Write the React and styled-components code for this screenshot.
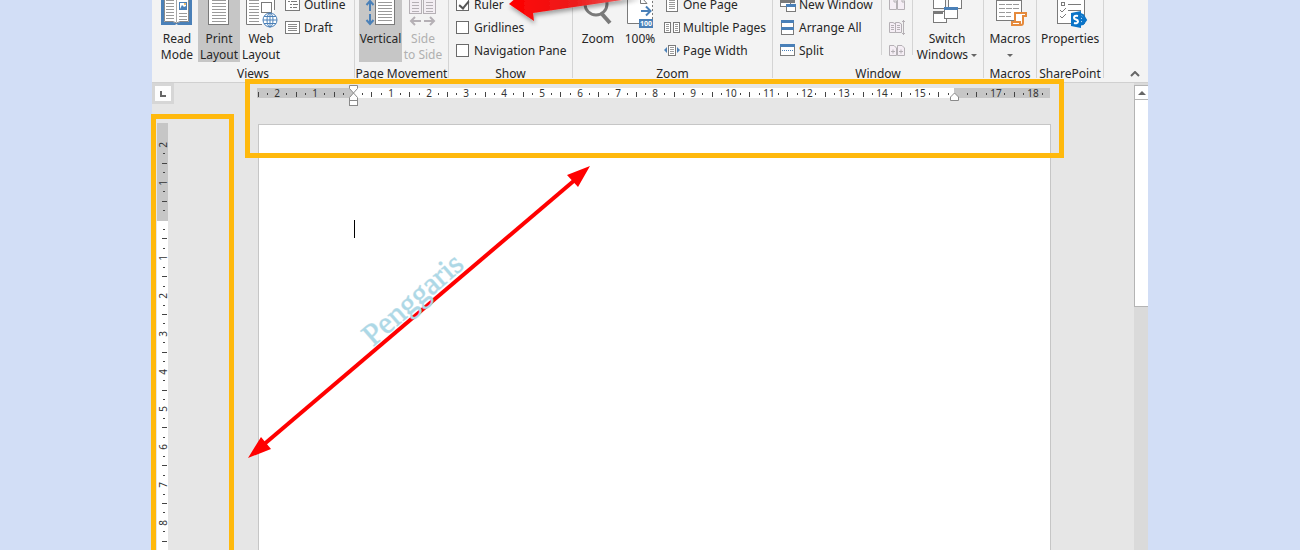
import React, {useState} from "react"
import styled, {createGlobalStyle, css} from "styled-components"

const CM = 96 / 2.54;

const GREY = "#7a7a7a";
const LIGHT = "#b5b0b5";
const BLUE = "#4a80b8";

const lines = (x1, x2, from, to, step, color = "#9a9a9a") => {
    const d = [];
    for (let y = from; y <= to; y += step) d.push(`M${x1} ${y}.5H${x2}`);
    return <path d={d.join("")} stroke={color}/>;
};

/* ---- large icons, 32 x 32 ---- */

const ReadIcon = () => (
    <LargeSvg viewBox="0 0 32 32">
        <path d="M0 0H31V32H17L15.500 31L14 32H0Z" fill={BLUE}/>
        <path d="M3 0H28V29H19L15.500 30L12 29H3Z" fill="#fff"/>
        <path d="M3.500 0V28.500H12L15.500 30L19 28.500H27.500V0" fill="none" stroke="#8a8a8a"/>
        <path d="M15.500 0V29" stroke="#a8a8a8"/>
        {lines(5, 13, 7, 26, 3)}
        {lines(18, 26, 20, 26, 3)}
        <rect x="18.500" y="9.500" width="7" height="7" fill="#fff" stroke={BLUE}/>
        <path d="M19 16L21 12L23 14L25 13V16Z" fill={BLUE}/>
        <circle cx="24" cy="11" r="1" fill="#e8a33d"/>
    </LargeSvg>
)

const PrintIcon = () => (
    <LargeSvg viewBox="0 0 32 32">
        <rect x="5.500" y="0.500" width="20" height="31" fill="#fff" stroke={GREY}/>
        {lines(9, 23, 4, 28, 3)}
    </LargeSvg>
)

const WebIcon = () => (
    <LargeSvg viewBox="0 0 32 32">
        <path d="M1.500 0V31.500H17M29.500 0V17" fill="none" stroke={GREY}/>
        <path d="M2 0H29V19L18 31H2Z" fill="#fff"/>
        {lines(4, 14, 4, 28, 3)}
        <rect x="16.500" y="9.500" width="10" height="10" fill="#fff" stroke={GREY}/>
        <circle cx="25" cy="27" r="7" fill="#fff" stroke={BLUE}/>
        <ellipse cx="25" cy="27" rx="3" ry="7" fill="none" stroke={BLUE}/>
        <path d="M18 27H32M25 20V34M19 23.500H31M19 30.500H31" stroke={BLUE}/>
    </LargeSvg>
)

const VerticalIcon = () => (
    <LargeSvg viewBox="0 0 32 32">
        <path d="M5 9V18M1.500 12L5 8L8.500 12M5 21V30M1.500 27L5 31L8.500 27" fill="none" stroke={BLUE} strokeWidth="2"/>
        <rect x="10.500" y="0.500" width="19" height="31" fill="#fff" stroke={GREY}/>
        {lines(13, 27, 3, 28, 3)}
    </LargeSvg>
)

const SideIcon = () => (
    <LargeSvg viewBox="0 0 32 32">
        <rect x="2.500" y="0.500" width="12" height="20" fill="#f3eef3" stroke={LIGHT}/>
        <rect x="16.500" y="0.500" width="12" height="20" fill="#f3eef3" stroke={LIGHT}/>
        {lines(5, 12, 3, 18, 3, LIGHT)}
        {lines(19, 26, 3, 18, 3, LIGHT)}
        <path d="M14 28H4M8 24L4 28L8 32M17 28H27M23 24L27 28L23 32" fill="none" stroke={LIGHT} strokeWidth="2"/>
    </LargeSvg>
)

const ZoomIcon = () => (
    <LargeSvg viewBox="0 0 32 32">
        <circle cx="14" cy="11" r="11" fill="#fafafa" stroke={GREY} strokeWidth="3"/>
        <path d="M20 21L28 30" stroke={GREY} strokeWidth="4"/>
    </LargeSvg>
)

const HundredIcon = () => (
    <LargeSvg viewBox="0 0 32 32">
        <path d="M3.500 0V30.500H16V26H28V0Z" fill="#fff"/>
        <path d="M3.500 0V30.500H15" fill="none" stroke={GREY}/>
        <path d="M16.500 3V10.500H23L18 5" fill="none" stroke={GREY}/>
        <path d="M28.500 4V26" stroke={GREY} strokeDasharray="2 2"/>
        <path d="M17 18H26M22 13.500L26.500 18L22 22.500" fill="none" stroke={BLUE} strokeWidth="2"/>
        <rect x="15" y="26" width="14" height="9" fill={BLUE}/>
        <text x="22" y="33" textAnchor="middle" fontSize="7" fontWeight="700" fill="#fff">100</text>
    </LargeSvg>
)

const SwitchIcon = () => (
    <LargeSvg viewBox="0 0 32 32">
        <g fill="#fff" stroke={GREY}>
            <rect x="2.500" y="2.500" width="12" height="13"/>
            <rect x="17.500" y="2.500" width="13" height="13"/>
            <rect x="2.500" y="18.500" width="13" height="11"/>
        </g>
        <path d="M2 18H12V21H2Z" fill={GREY}/>
        <rect x="13.500" y="14.500" width="13" height="11" fill="#fff" stroke={GREY}/>
        <path d="M13 14H27V17H13Z" fill={BLUE}/>
    </LargeSvg>
)

const MacrosIcon = () => (
    <LargeSvg viewBox="0 0 32 32">
        <rect x="2.500" y="0.500" width="25" height="27" fill="#fff" stroke={GREY}/>
        <path d="M2 5H28V8H2Z" fill={GREY}/>
        <path d="M5 11.500H25M5 15.500H25M5 19.500H17M5 23.500H17" stroke="#9a9a9a" strokeDasharray="6 1"/>
        <path d="M21 20H32V23H29V30Q29 32 27 32H18V29H21Z" fill="#fff" stroke="#e58a3c" strokeWidth="2"/>
        <path d="M18 29H26V32" fill="none" stroke="#e58a3c" strokeWidth="2"/>
    </LargeSvg>
)

const PropertiesIcon = () => (
    <LargeSvg viewBox="0 0 32 32">
        <rect x="3.500" y="0.500" width="27" height="30" fill="#fff" stroke={GREY}/>
        <rect x="7.500" y="9.500" width="3" height="3" fill="none" stroke={GREY}/>
        <path d="M14 11.500H27M14 17.500H27" stroke={GREY}/>
        <path d="M6 17L8 19L12 15M6 23L8 25L12 21" fill="none" stroke={GREY}/>
        <path d="M24 20L29 22L32 27L29 31L24 32M26 27H32M27 23L30 27L27 31" fill="none" stroke="#0a74c8" strokeWidth="2"/>
        <path d="M17 20L27 18V35L17 33Z" fill="#0a74c8"/>
        <path d="M24 23Q20 22 20 25Q20 26 22 26.500Q24 27 24 28.500Q23.500 31 20 30" fill="none" stroke="#fff" strokeWidth="2"/>
    </LargeSvg>
)

/* ---- small icons, 16 x 16 ---- */

const smallIcons = {
    outline: (
        <>
            <rect x="0.500" y="1.500" width="14" height="12" fill="#fff" stroke={GREY}/>
            <path d="M3 4.500H5M6 4.500H12M5 7.500H7M8 7.500H13M5 10.500H7M8 10.500H12" stroke={GREY}/>
        </>
    ),
    draft: (
        <>
            <rect x="0.500" y="1.500" width="14" height="12" fill="#fff" stroke={GREY}/>
            <path d="M3 4.500H12M3 6.500H12M3 8.500H12M3 10.500H12" stroke="#8a8a8a"/>
        </>
    ),
    onePage: (
        <>
            <rect x="2.500" y="0.500" width="11" height="14" fill="#fff" stroke={GREY}/>
            {lines(5, 11, 3, 12, 2)}
        </>
    ),
    pages: (
        <>
            <rect x="0.500" y="2.500" width="6" height="10" fill="#fff" stroke={GREY}/>
            <rect x="9.500" y="2.500" width="6" height="10" fill="#fff" stroke={GREY}/>
            {lines(2, 5, 4, 10, 2)}
            {lines(11, 14, 4, 10, 2)}
        </>
    ),
    width: (
        <>
            <rect x="4.500" y="2.500" width="7" height="10" fill="#fff" stroke={GREY}/>
            {lines(6, 10, 4, 10, 2)}
            <path d="M3 4V10L0 7ZM13 4V10L16 7Z" fill={BLUE}/>
        </>
    ),
    newWindow: (
        <>
            <rect x="0.500" y="3.500" width="10" height="6" fill="#fff" stroke={GREY}/>
            <path d="M0 3H15V6H0Z" fill={GREY}/>
            <rect x="6.500" y="7.500" width="9" height="7" fill="#fff" stroke={GREY}/>
            <path d="M6 7H16V10H6Z" fill={BLUE}/>
        </>
    ),
    arrange: (
        <>
            <rect x="1.500" y="0.500" width="12" height="14" fill="#fff" stroke={GREY}/>
            <path d="M1 0H14V3H1ZM1 7H14V10H1Z" fill={BLUE}/>
        </>
    ),
    split: (
        <>
            <rect x="0.500" y="1.500" width="14" height="11" fill="#fff" stroke={GREY}/>
            <path d="M0 1H15V4H0Z" fill={BLUE}/>
            <path d="M2 7.500H14" stroke={BLUE} strokeDasharray="1 1"/>
        </>
    ),
    sideBySide: (
        <path d="M0.500 1.500H5L7.500 4V12.500H0.500ZM8.500 1.500H13L15.500 4V12.500H8.500ZM5 2V5H7M13 2V5H15" fill="#f5eef5" stroke={LIGHT}/>
    ),
    syncScroll: (
        <>
            <path d="M0.500 2.500H4L6.500 4V12.500H0.500ZM6.500 2.500H10L12.500 4V12.500H6.500Z" fill="#f5eef5" stroke={LIGHT}/>
            <path d="M2 5.500H5M2 7.500H5M2 9.500H5M8 5.500H11M8 7.500H11M8 9.500H11M14.500 0V15M13 1.500H16M13 13.500H16" stroke={LIGHT}/>
        </>
    ),
    resetPosition: (
        <>
            <path d="M0.500 2.500H5L7.500 5V12.500H0.500ZM8.500 2.500H13L15.500 5V12.500H8.500Z" fill="#f5eef5" stroke={LIGHT}/>
            <path d="M2 8.500H6M4 6.500V10.500M10 8.500H14M12 6.500V10.500" stroke={LIGHT}/>
        </>
    )
};

function SmallCommand({icon, label, title, disabled}) {
    return (
        <SmallButton disabled={disabled} aria-label={title}>
            <SmallSvg viewBox="0 0 16 16">{smallIcons[icon]}</SmallSvg>
            {label}
        </SmallButton>
    )
}

function LargeCommand({icon, active, disabled, width, children}) {
    return (
        <LargeButton $active={active} $width={width} disabled={disabled}>
            {icon}
            <span>{children}</span>
        </LargeButton>
    )
}

function Group({name, width, children}) {
    return (
        <RibbonGroup $width={width}>
            <GroupBody>{children}</GroupBody>
            <GroupName>{name}</GroupName>
        </RibbonGroup>
    )
}

function Ribbon() {
    const [shown, setShown] = useState({Ruler: true, Gridlines: false, "Navigation Pane": false});

    const toggle = (key) => setShown(prev => ({...prev, [key]: !prev[key]}));

    return (
        <RibbonBar>
            <Group name="Views" width={203}>
                <LargeCommand icon={<ReadIcon/>}>Read<br/>Mode</LargeCommand>
                <LargeCommand icon={<PrintIcon/>} active>Print<br/>Layout</LargeCommand>
                <LargeCommand icon={<WebIcon/>}>Web<br/>Layout</LargeCommand>
                <SmallColumn>
                    <SmallCommand icon="outline" label="Outline"/>
                    <SmallCommand icon="draft" label="Draft"/>
                </SmallColumn>
            </Group>
            <Group name="Page Movement" width={94}>
                <LargeCommand icon={<VerticalIcon/>} active width={43}>Vertical</LargeCommand>
                <LargeCommand icon={<SideIcon/>} disabled>Side<br/>to Side</LargeCommand>
            </Group>
            <Group name="Show" width={124}>
                <SmallColumn>
                    {Object.keys(shown).map(key => (
                        <CheckLabel key={key}>
                            <CheckBox type="checkbox" checked={shown[key]} onChange={() => toggle(key)}/>
                            {key}
                        </CheckLabel>
                    ))}
                </SmallColumn>
            </Group>
            <Group name="Zoom" width={200}>
                <LargeCommand icon={<ZoomIcon/>}>Zoom</LargeCommand>
                <LargeCommand icon={<HundredIcon/>}>100%</LargeCommand>
                <SmallColumn>
                    <SmallCommand icon="onePage" label="One Page"/>
                    <SmallCommand icon="pages" label="Multiple Pages"/>
                    <SmallCommand icon="width" label="Page Width"/>
                </SmallColumn>
            </Group>
            <Group name="Window" width={211}>
                <SmallColumn $width={104}>
                    <SmallCommand icon="newWindow" label="New Window"/>
                    <SmallCommand icon="arrange" label="Arrange All"/>
                    <SmallCommand icon="split" label="Split"/>
                </SmallColumn>
                <Divider/>
                <SmallColumn $width={30} $inset={7}>
                    <SmallCommand icon="sideBySide" title="View Side by Side" disabled/>
                    <SmallCommand icon="syncScroll" title="Synchronous Scrolling" disabled/>
                    <SmallCommand icon="resetPosition" title="Reset Window Position" disabled/>
                </SmallColumn>
                <Divider/>
                <LargeCommand icon={<SwitchIcon/>} width={68}>Switch<br/>Windows <Caret/></LargeCommand>
            </Group>
            <Group name="Macros" width={53}>
                <LargeCommand icon={<MacrosIcon/>} width={44}>Macros<br/><Caret/></LargeCommand>
            </Group>
            <Group name="SharePoint" width={67}>
                <LargeCommand icon={<PropertiesIcon/>} width={58}>Properties</LargeCommand>
            </Group>
            <CollapseButton aria-label="Collapse the Ribbon">
                <svg width="10" height="6" viewBox="0 0 10 6">
                    <path d="M1 5L5 1L9 5" fill="none" stroke="#666" strokeWidth="2"/>
                </svg>
            </CollapseButton>
        </RibbonBar>
    )
}

// quarter marks between the numbers: long at the half, dots either side
const quarters = (from, to) => {
    const marks = [];
    for (let q = from * 4; q <= to * 4; q++) {
        if (q % 4 !== 0) marks.push({at: q / 4, long: q % 2 === 0});
    }
    return marks;
};

function TopRuler() {
    const zero = 96;
    const numbers = [-2, -1, 1, 2, 3, 4, 5, 6, 7, 8, 9, 10, 11, 12, 13, 14, 15, 17, 18];

    return (
        <TopRulerSvg>
            <rect y="4" width="100%" height="10" fill="#c6c6c6"/>
            <rect x={zero} y="4" width="601" height="10" fill="#fff"/>
            {quarters(-2.5, 18.25).map(({at, long}) => (
                <rect key={at} x={Math.floor(zero + at * CM)} y={long ? 8 : 9} width="1" height={long ? 5 : 2} fill="#444"/>
            ))}
            {numbers.map(n => (
                <text key={n} x={Math.round(zero + n * CM)} y="13" textAnchor="middle">{Math.abs(n)}</text>
            ))}
            <g fill="#fff" stroke="#8a8a8a">
                <path d="M92.500 1.500H100.500V4.500L96.500 9L92.500 4.500Z"/>
                <path d="M96.500 9L100.500 13.500V16.500H92.500V13.500Z"/>
                <rect x="92.500" y="16.500" width="8" height="5"/>
                <path d="M697.500 9L701.500 13V16.500H693.500V13Z"/>
            </g>
        </TopRulerSvg>
    )
}

function SideRuler() {
    const zero = 98;
    const numbers = [-2, -1, 1, 2, 3, 4, 5, 6, 7, 8];

    return (
        <SideRulerSvg>
            <rect width="100%" height="100%" fill="#fff"/>
            <rect width="100%" height={zero} fill="#c6c6c6"/>
            {quarters(-1.75, 8.5).map(({at, long}) => (
                <rect key={at} x={long ? 5 : 6} y={Math.floor(zero + at * CM) - 1} width={long ? 5 : 2} height="1" fill="#444"/>
            ))}
            {numbers.map(n => (
                <text key={n} transform={`translate(10 ${Math.floor(zero + n * CM)}) rotate(-90)`} textAnchor="middle">{Math.abs(n)}</text>
            ))}
        </SideRulerSvg>
    )
}

function Notes() {
    return (
        <>
            <Frame $left={245} $top={79} $width={819} $height={79}/>
            <Frame $left={151} $top={114} $width={83} $height={460}/>
            <NotesSvg>
                <defs>
                    <linearGradient id="red" x1="0" y1="0" x2="1" y2="0">
                        <stop offset="0" stopColor="#f00"/>
                        <stop offset="0.500" stopColor="#ec1c1c"/>
                        <stop offset="1" stopColor="#e66"/>
                    </linearGradient>
                    <filter id="shade" x="-10%" y="-10%" width="120%" height="160%">
                        <feDropShadow dx="1" dy="3" stdDeviation="2" floodOpacity="0.350"/>
                    </filter>
                </defs>
                <path d="M509 4L518 -4H640L622 0L533 13L534 21Z" fill="url(#red)" filter="url(#shade)"/>
                <path d="M262 446L576 179" stroke="#f00" strokeWidth="4"/>
                <path d="M590 166L578 187L567 175ZM248 458L261 437L271 449Z" fill="#f00"/>
                <text transform="translate(373 347) rotate(-41)">Penggaris</text>
            </NotesSvg>
        </>
    )
}

function App() {
    return (
        <>
            <GlobalStyle/>
            <Screen>
                <Ribbon/>
                <Workspace>
                    <RulerColumn>
                        <TabSelector aria-label="Left Tab">
                            <svg width="6" height="6" viewBox="0 0 6 6">
                                <path d="M1 0V5H6" fill="none" stroke="#666" strokeWidth="2"/>
                            </svg>
                        </TabSelector>
                        <SideRuler/>
                    </RulerColumn>
                    <DocumentColumn>
                        <TopRuler/>
                        <Paper><TextCursor/></Paper>
                    </DocumentColumn>
                    <ScrollTrack>
                        <ScrollButton aria-label="Scroll up">
                            <svg width="8" height="4" viewBox="0 0 8 4"><path d="M0 4L4 0L8 4Z" fill="#666"/></svg>
                        </ScrollButton>
                        <ScrollThumb/>
                    </ScrollTrack>
                </Workspace>
                <Notes/>
            </Screen>
        </>
    )
}

export default App

const GlobalStyle = createGlobalStyle`
    * {
        box-sizing: border-box;
    }
    body {
        margin: 0;
        background: #d2def6;
        font-family: "Noto Sans", "Open Sans", sans-serif;
        font-size: 12px;
        color: #262626;
    }
    button {
        font: inherit;
        color: inherit;
        border: none;
        padding: 0;
        background: none;
    }
`

const Screen = styled.div`
    position: relative;
    display: flex;
    flex-direction: column;
    height: 100vh;
    padding: 0 152px;
    overflow: hidden;
`

const RibbonBar = styled.div`
    display: flex;
    flex-shrink: 0;
    align-items: flex-end;
    height: 83px;
    padding-bottom: 4px;
    background: #f3f3f3;
    border-bottom: 1px solid #d0d0d0;
`

const RibbonGroup = styled.div`
    flex: 0 0 ${props => props.$width}px;
    border-right: 1px solid #d4d4d4;
`

const GroupBody = styled.div`
    display: flex;
    height: 69px;
    padding-left: 4px;
`

const GroupName = styled.div`
    height: 16px;
    line-height: 24px;
    text-align: center;
    white-space: nowrap;
`

const LargeButton = styled.button`
    display: flex;
    flex-direction: column;
    align-items: center;
    flex: 0 0 ${props => props.$width || 42}px;
    height: 69px;
    line-height: 16px;
    text-align: center;
    white-space: nowrap;
    background: ${props => props.$active ? "#c6c6c6" : "transparent"};

    &:disabled {
        color: #b0b0b0;
    }
`

const LargeSvg = styled.svg`
    flex: none;
    width: 32px;
    height: 32px;
    margin-bottom: 6px;
    overflow: visible;
`

const SmallColumn = styled.div`
    display: flex;
    flex-direction: column;
    padding-left: ${props => props.$inset || 3}px;
    ${props => props.$width && css`
        flex: 0 0 ${props.$width}px;
    `}
`

const smallRow = css`
    display: flex;
    align-items: center;
    height: 23px;
    line-height: 12px;
    white-space: nowrap;
`

const SmallButton = styled.button`
    ${smallRow}
    gap: 3px;
`

const SmallSvg = styled.svg`
    width: 16px;
    height: 16px;
`

const CheckLabel = styled.label`
    ${smallRow}
    gap: 5px;
`

const CheckBox = styled.input`
    appearance: none;
    width: 13px;
    height: 13px;
    margin: 0;
    border: 1px solid #6a6a6a;
    background: #fff;

    &:checked::after {
        content: "";
        display: block;
        width: 4px;
        height: 8px;
        margin: 0 0 0 4px;
        border: solid #555;
        border-width: 0 2px 2px 0;
        transform: rotate(40deg);
    }
`

const Divider = styled.div`
    width: 1px;
    height: 62px;
    background: #d4d4d4;
`

const Caret = styled.span`
    display: inline-block;
    vertical-align: middle;
    border: 3px solid transparent;
    border-top-color: #666;
    border-bottom: none;
`

const CollapseButton = styled.button`
    margin-left: auto;
    width: 26px;
    height: 8px;
    line-height: 0;
`

const Workspace = styled.div`
    display: flex;
    flex: 1;
    min-height: 0;
    background: #e6e6e6;
`

const RulerColumn = styled.div`
    display: flex;
    flex-direction: column;
    flex: 0 0 105px;
`

const TabSelector = styled.button`
    display: flex;
    align-items: center;
    justify-content: center;
    width: 22px;
    height: 21px;
    border: 3px solid #d6d6d6;
    background: #fdfdfd;
`

const rulerText = css`
    text {
        font-size: 10px;
        fill: #333;
    }
`

const TopRulerSvg = styled.svg`
    display: block;
    width: 100%;
    height: 24px;
    margin-top: 1px;
    ${rulerText}
`

const SideRulerSvg = styled.svg`
    flex: 1;
    width: 11px;
    margin: 19px 0 0 5px;
    ${rulerText}
`

const DocumentColumn = styled.div`
    display: flex;
    flex-direction: column;
    flex: 1;
    padding-right: 84px;
`

const Paper = styled.div`
    flex: 1;
    margin: 16px -1px 0 1px;
    padding: 95px;
    background: #fff;
    border: 1px solid #c6c6c6;
    border-bottom: none;
`

const TextCursor = styled.div`
    width: 1px;
    height: 18px;
    background: #000;
`

const ScrollTrack = styled.div`
    flex: 0 0 14px;
    padding-top: 2px;
    background: #dadada;
`

const ScrollButton = styled.button`
    display: flex;
    align-items: center;
    justify-content: center;
    width: 14px;
    height: 15px;
    background: #fff;
    border: 1px solid #b4b4b4;
    border-right: none;
`

const ScrollThumb = styled.div`
    height: 208px;
    margin-top: -1px;
    background: #fff;
    border: 1px solid #b4b4b4;
    border-right: none;
`

const Frame = styled.div`
    position: absolute;
    left: ${props => props.$left}px;
    top: ${props => props.$top}px;
    width: ${props => props.$width}px;
    height: ${props => props.$height}px;
    border: 5px solid #ffb90d;
    pointer-events: none;
`

const NotesSvg = styled.svg`
    position: absolute;
    top: 0;
    left: 0;
    width: 100%;
    height: 100%;
    pointer-events: none;

    text {
        font-family: "Liberation Serif", serif;
        font-size: 31px;
        fill: #add8e6;
        stroke: #add8e6;
        stroke-opacity: 0.6;
    }
`
